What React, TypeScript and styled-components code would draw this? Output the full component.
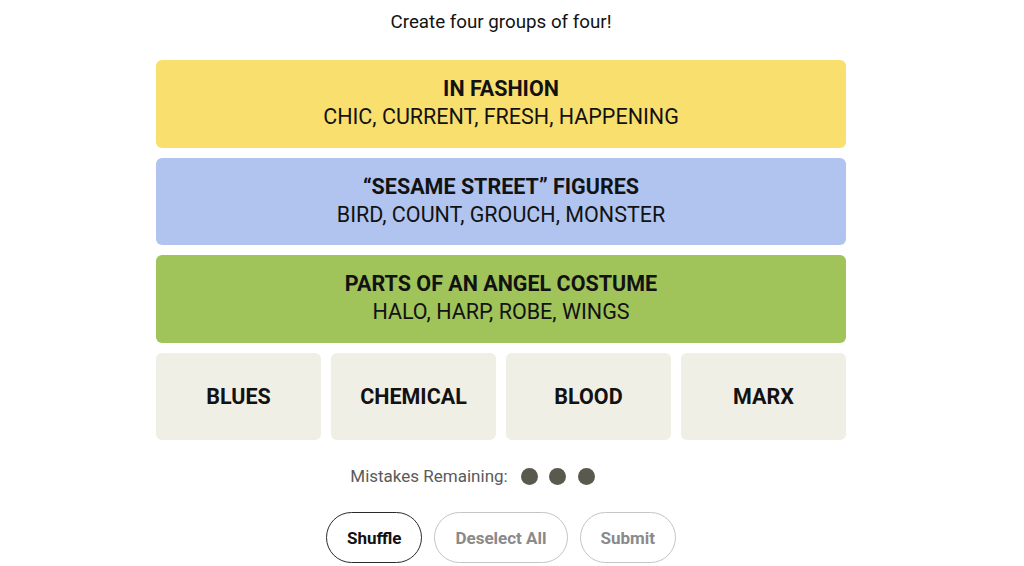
import React from "react";
import styled, { createGlobalStyle } from "styled-components";

const Global = createGlobalStyle`
  html, body { margin: 0; padding: 0; background: #ffffff; }
  body { font-family: Roboto, "Liberation Sans", Arial, sans-serif; color: #121212; }
`;

const Page = styled.main`
  width: 1002px;
  display: flex;
  flex-direction: column;
  align-items: center;
  box-sizing: border-box;
`;

const Prompt = styled.p`
  margin: 11px 0 0;
  font-size: 18.75px;
  line-height: 22px;
  font-weight: 400;
  color: #121212;
`;

const Board = styled.section`
  margin-top: 27px;
  width: 690px;
  display: flex;
  flex-direction: column;
  gap: 10px;
`;

const Solved = styled.div<{ $bg: string }>`
  height: 87.5px;
  border-radius: 6px;
  background: ${(p) => p.$bg};
  display: flex;
  flex-direction: column;
  align-items: center;
  justify-content: center;
  text-transform: uppercase;
  padding-bottom: 2px;
  box-sizing: border-box;
`;

const Category = styled.h3`
  margin: 0;
  font-size: 21.5px;
  line-height: 28px;
  font-weight: 700;
`;

const Members = styled.div`
  font-size: 21.5px;
  line-height: 27px;
  font-weight: 400;
`;

const Grid = styled.div`
  display: grid;
  grid-template-columns: repeat(4, 1fr);
  gap: 10px;
`;

const Tile = styled.button`
  height: 87.5px;
  border: none;
  border-radius: 6px;
  background: #efefe6;
  color: #121212;
  font-family: inherit;
  font-size: 21.5px;
  font-weight: 700;
  text-transform: uppercase;
  cursor: pointer;
`;

const Mistakes = styled.div`
  margin-top: 26px;
  display: flex;
  align-items: center;
  gap: 13px;
  font-size: 17px;
  color: #5a5a5a;
`;

const Dots = styled.div`
  display: flex;
  gap: 11.5px;
`;

const Dot = styled.span<{ $used?: boolean }>`
  width: 17px;
  height: 17px;
  border-radius: 50%;
  background: #5a594e;
  visibility: ${(p) => (p.$used ? "hidden" : "visible")};
`;

const Actions = styled.div`
  margin-top: 26px;
  display: flex;
  gap: 12px;
`;

const Pill = styled.button<{ $active?: boolean }>`
  height: 51px;
  padding: 0 20px;
  border-radius: 999px;
  background: #ffffff;
  border: 1px solid ${(p) => (p.$active ? "#2a2a2a" : "#c4c4c4")};
  color: ${(p) => (p.$active ? "#121212" : "#8a8a8a")};
  font-family: inherit;
  font-size: 17px;
  font-weight: 700;
  cursor: pointer;
  box-sizing: border-box;
`;

const groups = [
  { bg: "#f9df6d", title: "In Fashion", words: "Chic, Current, Fresh, Happening" },
  { bg: "#b0c4ef", title: "\u201cSesame Street\u201d Figures", words: "Bird, Count, Grouch, Monster" },
  { bg: "#a0c35a", title: "Parts of an Angel Costume", words: "Halo, Harp, Robe, Wings" },
];

const remaining = ["Blues", "Chemical", "Blood", "Marx"];
const mistakes = [false, false, false, true, true];

export default function App() {
  return (
    <>
      <Global />
      <Page>
        <Prompt>Create four groups of four!</Prompt>
        <Board>
          {groups.map((g) => (
            <Solved key={g.title} $bg={g.bg}>
              <Category>{g.title}</Category>
              <Members>{g.words}</Members>
            </Solved>
          ))}
          <Grid>
            {remaining.map((w) => (
              <Tile key={w}>{w}</Tile>
            ))}
          </Grid>
        </Board>
        <Mistakes>
          Mistakes Remaining:
          <Dots>
            {mistakes.map((used, i) => (
              <Dot key={i} $used={used} />
            ))}
          </Dots>
        </Mistakes>
        <Actions>
          <Pill $active>Shuffle</Pill>
          <Pill>Deselect All</Pill>
          <Pill>Submit</Pill>
        </Actions>
      </Page>
    </>
  );
}
